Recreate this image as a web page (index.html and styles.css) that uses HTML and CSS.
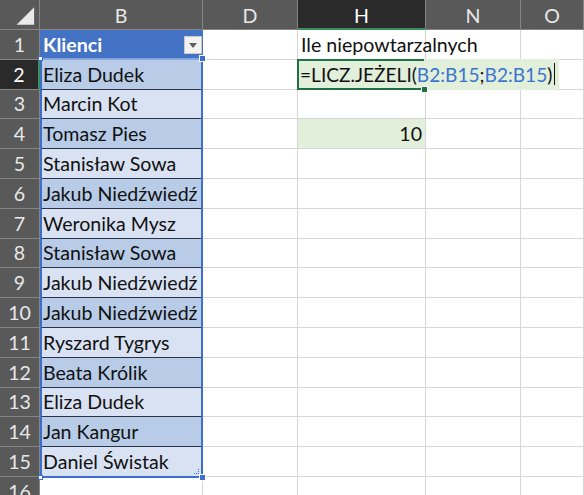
FILE: index.html
```html
<!DOCTYPE html>
<html lang="pl">
<head>
<meta charset="utf-8">
<title>Arkusz</title>
<link rel="stylesheet" href="styles.css">
</head>
<body>
<div class="sheet">
  <div class="grid">
    <div class="ch corner"><svg class="tri" width="40" height="30" viewBox="0 0 40 30"><polygon points="17,25 35,25 35,7" fill="#e9e9e9"/></svg></div>
    <div class="ch">B</div>
    <div class="ch">D</div>
    <div class="ch ch-sel">H</div>
    <div class="ch">N</div>
    <div class="ch">O</div>

    <div class="rh">1</div>
    <div class="c tbl-head">Klienci<span class="dd"><span class="dd-tri"></span></span></div>
    <div class="c"></div>
    <div class="c over">Ile niepowtarzalnych</div>
    <div class="c"></div>
    <div class="c"></div>

    <div class="rh rh-sel">2</div>
    <div class="c t dark">Eliza Dudek</div>
    <div class="c"></div>
    <div class="c edit-cell">
      <div class="editor">=LICZ.JEŻELI(<span class="ref">B2:B15</span>;<span class="ref">B2:B15</span>)<span class="caret"></span></div>
      <div class="active"><span class="fill"></span></div>
    </div>
    <div class="c"></div>
    <div class="c"></div>

    <div class="rh">3</div>
    <div class="c t light">Marcin Kot</div>
    <div class="c"></div><div class="c"></div><div class="c"></div><div class="c"></div>

    <div class="rh">4</div>
    <div class="c t dark">Tomasz Pies</div>
    <div class="c"></div>
    <div class="c num green">10</div>
    <div class="c"></div><div class="c"></div>

    <div class="rh">5</div>
    <div class="c t light">Stanisław Sowa</div>
    <div class="c"></div><div class="c"></div><div class="c"></div><div class="c"></div>

    <div class="rh">6</div>
    <div class="c t dark">Jakub Niedźwiedź</div>
    <div class="c"></div><div class="c"></div><div class="c"></div><div class="c"></div>

    <div class="rh">7</div>
    <div class="c t light">Weronika Mysz</div>
    <div class="c"></div><div class="c"></div><div class="c"></div><div class="c"></div>

    <div class="rh">8</div>
    <div class="c t dark">Stanisław Sowa</div>
    <div class="c"></div><div class="c"></div><div class="c"></div><div class="c"></div>

    <div class="rh">9</div>
    <div class="c t light">Jakub Niedźwiedź</div>
    <div class="c"></div><div class="c"></div><div class="c"></div><div class="c"></div>

    <div class="rh">10</div>
    <div class="c t dark">Jakub Niedźwiedź</div>
    <div class="c"></div><div class="c"></div><div class="c"></div><div class="c"></div>

    <div class="rh">11</div>
    <div class="c t light">Ryszard Tygrys</div>
    <div class="c"></div><div class="c"></div><div class="c"></div><div class="c"></div>

    <div class="rh">12</div>
    <div class="c t dark">Beata Królik</div>
    <div class="c"></div><div class="c"></div><div class="c"></div><div class="c"></div>

    <div class="rh">13</div>
    <div class="c t light">Eliza Dudek</div>
    <div class="c"></div><div class="c"></div><div class="c"></div><div class="c"></div>

    <div class="rh">14</div>
    <div class="c t dark">Jan Kangur</div>
    <div class="c"></div><div class="c"></div><div class="c"></div><div class="c"></div>

    <div class="rh">15</div>
    <div class="c t light last">Daniel Świstak</div>
    <div class="c"></div><div class="c"></div><div class="c"></div><div class="c"></div>

    <div class="rh">16</div>
    <div class="c"></div><div class="c"></div><div class="c"></div><div class="c"></div><div class="c"></div>
  </div>

  <div class="range">
    <span class="h h-tl"></span>
    <span class="h h-tr"></span>
    <span class="h h-bl"></span>
    <span class="h h-br"></span>
    <span class="resize"></span>
  </div>
</div>
</body>
</html>
```

FILE: styles.css
```css
html, body {
  margin: 0;
  padding: 0;
  background: #ffffff;
  overflow: hidden;
}

.sheet {
  position: relative;
  width: 584px;
  height: 495px;
  overflow: hidden;
  font-family: Lato, "Open Sans", sans-serif;
  font-size: 19.6px;
  color: #111111;
}

.grid {
  display: grid;
  grid-template-columns: 40px 163px 95px 128px 95px 63px;
  grid-template-rows: 30px repeat(16, 29.8px);
}

.ch {
  background: #595959;
  color: #e8e8e8;
  border-right: 1px solid #858585;
  border-bottom: 1px solid #858585;
  box-sizing: border-box;
  display: flex;
  align-items: center;
  justify-content: center;
  padding-top: 2px;
}

.corner {
  position: relative;
  padding: 0;
}

.tri {
  display: block;
}

.ch-sel {
  background: #2a2a2a;
  color: #ffffff;
  border-bottom: 2px solid #3c8f5a;
}

.rh {
  background: #595959;
  color: #e8e8e8;
  border-right: 1px solid #858585;
  border-bottom: 1px solid #858585;
  box-sizing: border-box;
  display: flex;
  align-items: center;
  justify-content: center;
}

.rh-sel {
  background: #2a2a2a;
  color: #ffffff;
  border-right: 2px solid #3c8f5a;
}

.c {
  border-right: 1px solid #d6d6d6;
  border-bottom: 1px solid #d6d6d6;
  box-sizing: border-box;
  display: flex;
  align-items: center;
  padding: 0 3px;
  white-space: nowrap;
  min-width: 0;
}

.over {
  overflow: visible;
  position: relative;
  z-index: 1;
}

.tbl-head {
  background: #4472c4;
  color: #ffffff;
  font-weight: bold;
  position: relative;
  border-right: none;
  border-bottom: 1px solid #8fa9dc;
}

.dd {
  position: absolute;
  right: 1px;
  top: 6px;
  width: 18px;
  height: 18px;
  box-sizing: border-box;
  background: #f3f3f3;
  border: 1px solid #c9c9c9;
  display: flex;
  align-items: center;
  justify-content: center;
}

.dd-tri {
  width: 0;
  height: 0;
  border-left: 4px solid transparent;
  border-right: 4px solid transparent;
  border-top: 5px solid #5e5e5e;
}

.t {
  border-right: none;
  border-bottom: 1px solid #2b3447;
}

.t.last {
  border-bottom: 1px solid #d6d6d6;
}

.dark {
  background: #b8cce8;
}

.light {
  background: #d9e2f3;
}

.num {
  justify-content: flex-end;
}

.green {
  background: #e2efda;
}

.edit-cell {
  position: relative;
  overflow: visible;
  z-index: 2;
  padding: 0;
}

.editor {
  position: absolute;
  left: -1px;
  top: -1px;
  bottom: -1px;
  width: 262px;
  background: #e2efda;
  display: flex;
  align-items: center;
  padding-left: 3px;
  box-sizing: border-box;
  color: #111111;
  font-size: 19.1px;
}

.ref {
  color: #3b74d0;
}

.caret {
  display: inline-block;
  flex: none;
  width: 1px;
  height: 22px;
  background: #111111;
  margin-left: 2px;
}

.active {
  position: absolute;
  left: -1px;
  top: -1px;
  bottom: -1px;
  right: 1px;
  border-top: 2px solid #1e7145;
  border-left: 2px solid #1e7145;
  border-bottom: 2px solid #1e7145;
}

.fill {
  position: absolute;
  right: -4px;
  bottom: -5px;
  width: 5px;
  height: 5px;
  background: #1e7145;
  border: 1px solid #ffffff;
}

.range {
  position: absolute;
  left: 40px;
  top: 58px;
  width: 163px;
  height: 420px;
  box-sizing: border-box;
  border: 2px solid #3c6fcd;
  border-top-color: #7fa2e0;
  border-top-width: 1px;
  pointer-events: none;
  z-index: 3;
}

.h {
  position: absolute;
  box-sizing: border-box;
}

.h-tl, .h-bl {
  width: 5px;
  height: 5px;
  background: #ffffff;
  border: 1px solid #3c6fcd;
}

.h-tl {
  left: -4px;
  top: -3px;
}

.h-bl {
  left: -4px;
  bottom: -4px;
}

.h-tr, .h-br {
  width: 7px;
  height: 7px;
  background: #3c6fcd;
  border: 1px solid #ffffff;
}

.h-tr {
  right: -5px;
  top: -4px;
}

.h-br {
  right: -5px;
  bottom: -5px;
}

.resize {
  position: absolute;
  right: 2px;
  bottom: 2px;
  width: 4px;
  height: 4px;
  border-right: 1px dotted #3c6fcd;
  border-bottom: 1px dotted #3c6fcd;
}
```
